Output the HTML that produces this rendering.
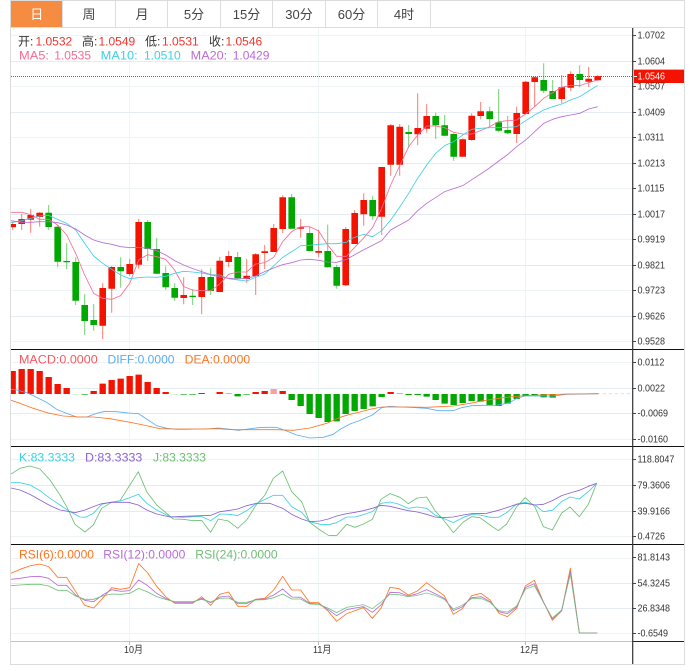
<!DOCTYPE html>
<html><head><meta charset="utf-8"><title>K线图</title>
<style>
html,body{margin:0;padding:0;background:#fff;width:693px;height:671px;overflow:hidden}
svg{display:block}
text{font-family:"Liberation Sans","Noto Sans CJK SC",sans-serif}
.ax{font-size:10px;fill:#333}
.tab{font-size:13px;fill:#444;text-anchor:middle}
.l{font-size:12px}
polyline{fill:none;stroke-width:2.5;stroke-linejoin:round}
</style></head><body>
<svg width="693" height="671" viewBox="0 0 693 671" xmlns="http://www.w3.org/2000/svg">
<defs><clipPath id="c"><rect x="11" y="28" width="621.5" height="613"/></clipPath></defs>
<rect width="693" height="671" fill="#fff"/>

<!-- grid -->
<g stroke="#eef3f6" stroke-width="1" fill="none">
<path d="M11 35.5H632M11 86.5H632M11 137.5H632M11 188.5H632M11 239.5H632M11 290.5H632M11 341.5H632"/>
<path d="M11 362.5H632M11 439.5H632M11 459.5H632M11 536.5H632M11 558.5H632M11 633.5H632"/>
<path d="M129.5 28V645M318.5 28V645M525.5 28V645"/>
</g>
<g stroke="#e3ecf3" stroke-width="1" fill="none">
<path d="M11 61.5H632M11 112.5H632M11 163.5H632M11 214.5H632M11 265.5H632M11 316.5H632"/>
<path d="M11 388.5H632M11 413.5H632M11 485.5H632M11 511.5H632M11 583.5H632M11 608.5H632"/>
</g>

<g clip-path="url(#c)">
<!-- wicks -->
<path stroke="#f41300" stroke-opacity=".55" stroke-width="1" fill="none" d="M12.7 221.7V230M21.7 214V230M30.7 209V232.7M39.7 211.7V226.7M102.7 283.3V339M111.7 266V312.7M129.7 259V276M138.7 218.7V268.7M183.7 277.3V304.3M201.7 269.3V314.3M219.7 257V292M228.7 251V267.3M246.7 258.7V282.7M255.7 253V295M264.7 245V269M273.7 224V252M282.7 195.3V233M300.7 219V237.7M318.7 229.7V257M345.7 227V286M354.7 210V244M363.7 193.3V225.7M381.7 167V235M390.7 124V175.7M399.7 124V175.7M417.7 93.3V145.3M426.7 104V132.7M462.7 138.3V156.7M471.7 113.3V140.7M480.7 102V119.3M516.7 106.7V143M525.7 81V114M534.7 76.7V106.7M561.7 75V103.3M570.7 71.3V91.3M588.7 67V87M597.7 75V80.7"/>
<path stroke="#00a800" stroke-opacity=".55" stroke-width="1" fill="none" d="M48.7 205V230M57.7 225V267M66.7 243.3V269M75.7 257.3V305M84.7 294V335M93.7 304V330.7M120.7 257.3V287.7M147.7 220V261M156.7 238V274M165.7 266.3V290M174.7 283.3V300.7M192.7 289.3V305M210.7 268.3V295M237.7 252V279M291.7 194V229M309.7 226.7V251.3M327.7 224.7V267.7M336.7 264.7V288.7M372.7 195.7V219.7M408.7 125V147.7M435.7 112.7V139M444.7 115V136.3M453.7 133.3V160.7M489.7 106.7V126M498.7 89V132.3M507.7 116V134.3M543.7 63.3V93.3M552.7 80V99M579.7 65.3V87.3"/>
<!-- bodies -->
<path stroke="#f41300" stroke-width="6.6" fill="none" d="M12.7 224V227.3M21.7 219V224M30.7 215V219.7M39.7 212.7V217M102.7 288V325.7M111.7 267V288.7M129.7 264V274M138.7 222V264.7M183.7 295V298M201.7 277V297M219.7 260.7V292M228.7 256V262M246.7 275.7V279M255.7 254.3V276M264.7 251.3V253M273.7 228V252M282.7 197.3V229M300.7 227.3V228.7M318.7 251V252.7M345.7 229V285.3M354.7 213V244M363.7 200V214.3M381.7 167V216.7M390.7 125.3V164.7M399.7 126.7V164.7M417.7 128V134.3M426.7 116V128.7M462.7 139.3V156.7M471.7 115.7V140M480.7 111.3V116M516.7 113V134M525.7 81.7V114M534.7 77.3V82M561.7 87.3V99M570.7 74V87.7M588.7 78.7V81.7M597.7 76V80.3"/>
<path stroke="#00a800" stroke-width="6.6" fill="none" d="M48.7 212.7V227M57.7 226.7V261.7M66.7 261V262.3M75.7 262V300.7M84.7 305V321M93.7 320V325M120.7 267V271.3M147.7 222V249M156.7 249V273.7M165.7 273V287.3M174.7 288V297.7M192.7 295.7V297M210.7 277V291M237.7 257V278.3M291.7 197.3V228.7M309.7 233V251M327.7 251V267.3M336.7 267V285.7M372.7 200V216.3M408.7 132V134M435.7 116V125.3M444.7 125.3V135.7M453.7 134V156.7M489.7 111.3V119M498.7 122.3V130.7M507.7 130V133.3M543.7 80V90.7M552.7 91V99M579.7 74V80"/>

<!-- MA left -->
<g transform="scale(.33333) translate(0,540)">
<polyline stroke="#fb6a94" points="33,97 65,97 92,104 119,118 146,118 173,135 200,165 227,220 254,285 281,340 308,355 335,358 362,347 389,310 416,240 443,224 470,230 497,238 524,270 551,320 578,330 605,332 632,332 659,312 686,283 713,276 740,276 767,252 794,248 821,232 848,185 875,155 902,140 929,140 956,153 983,195 1010,229 1040,229"/>
<polyline stroke="#3ccfe6" points="33,128 65,122 92,115 119,108 146,106 173,118 200,130 227,150 254,190 281,228 308,250 335,268 362,285 389,296 416,293 443,291 470,292 497,289 524,280 551,274 578,276 605,279 632,284 659,285 686,296 713,300 740,303 767,292 794,282 821,258 848,232 875,215 902,197 929,196 956,193 983,191 1010,191 1040,187"/>
<polyline stroke="#b96bd6" points="33,122 65,127 92,127 119,125 146,125 173,128 200,135 227,147 254,165 281,180 308,188 335,193 362,200 389,203 416,202 443,205 470,212 497,225 524,242 551,255 578,266 605,275 632,284 659,291 686,295 713,297 740,295 767,288 794,275 821,264 848,254 875,248 902,240 929,238 956,241 983,246 1010,247 1040,238"/>
</g>
<!-- MA right -->
<g transform="scale(.33333) translate(1050,0)">
<polyline stroke="#fb6a94" points="-10,769 0,757 40,715 68,682 95,625 122,555 150,495 176,440 203,405 230,378 257,378 284,383 311,397 338,402 365,402 392,392 419,380 446,365 473,362 500,360 527,342 554,320 581,295 608,278 635,262 662,256 689,257 716,248 743,240"/>
<polyline stroke="#3ccfe6" points="-10,727 0,717 40,703 68,710 95,692 122,660 150,620 176,580 203,535 230,495 257,460 284,437 311,425 338,405 365,388 392,385 419,383 446,383 473,382 500,380 527,362 554,345 581,330 608,320 635,312 662,300 689,290 716,273 743,256"/>
<polyline stroke="#b96bd6" points="-10,778 0,772 40,750 95,722 122,690 176,660 203,632 230,610 284,575 338,557 367,538 410,510 475,462 500,440 527,420 554,395 581,370 608,358 635,350 662,345 689,340 716,327 743,320"/>
</g>

<!-- MACD bars -->
<g transform="scale(.33333) translate(0,1035)" fill="none" stroke-width="19">
<path stroke="#f41300" d="M38 78V147M65 72V147M92 72V147M119 78V147M146 96V147M173 117V147M200 129V147M281 138V147M308 116V147M335 105V147M362 101V147M389 93V147M416 89V147M443 111V147M470 129V147M497 141V147M605 144V147M659 141V147M767 141V147M794 138V147M848 138V147M1172 141V147"/>
<path stroke="#f9a0a0" d="M686 144V147M821 132V147M1199 144V147"/>
<path stroke="#00a800" d="M254 147V149M551 147V149M578 147V149M713 147V154M740 147V149M875 147V165M902 147V183M929 147V207M956 147V219M983 147V231M1010 147V229M1037 147V207M1064 147V198M1091 147V192M1118 147V184M1145 147V156M1226 147V150M1253 147V150M1280 147V155M1307 147V165M1334 147V176M1361 147V180M1388 147V174M1415 147V168M1442 147V170M1469 147V180M1496 147V183M1523 147V176M1550 147V162M1577 147V152M1604 147V152M1631 147V157M1658 147V158"/>
<path stroke="#bfe3c0" d="M227 147V149M524 147V149M1685 147V150"/>
<path stroke="#cfe6f5" stroke-width="3" stroke-dasharray="10 8" d="M1790 146H1890"/>
<polyline stroke="#58adf2" points="33,133 50,135 80,143 110,157 140,172 170,193 200,205 230,216 260,216 290,205 315,199 350,200 385,204 415,206 440,222 470,242 500,250 530,253 560,253 590,252 620,252 655,249 685,252 715,256 745,252 775,248 800,247 830,247 860,258 890,270 930,279 970,277 1000,268 1020,253 1050,237 1080,226 1117,210 1145,188 1170,184 1200,186 1230,187 1280,190 1315,197 1360,197 1385,188 1415,182 1450,181 1490,181 1530,173 1550,160 1575,153 1620,153 1660,153 1700,148 1795,146"/>
<polyline stroke="#ff7420" points="33,166 60,175 100,190 140,203 190,213 240,216 280,216 330,221 380,230 430,240 480,251 520,252 600,252 650,251 700,254 760,254 830,254 880,256 930,249 980,235 1020,217 1050,208 1080,201 1110,193 1145,186 1170,186 1220,186 1280,187 1320,185 1360,183 1410,175 1450,167 1510,158 1560,153 1620,150 1700,147 1795,146"/>
</g>

<!-- KDJ -->
<g transform="scale(.33333) translate(0,1335)">
<polyline stroke="#6cbf74" points="33,87 60,70 90,63 120,72 150,105 180,150 200,185 225,238 255,261 280,240 305,190 335,172 360,167 415,80 440,140 470,180 520,222 550,223 580,227 605,226 632,262 655,222 685,228 713,250 740,225 770,178 795,150 820,100 848,78 875,140 905,170 929,232 960,255 985,271 1010,272 1040,238"/>
<polyline stroke="#3ccfe6" points="33,113 60,113 90,120 120,137 150,160 180,180 210,200 240,216 255,217 280,205 305,178 335,171 365,167 415,148 440,175 470,195 510,215 550,217 580,215 605,215 632,227 660,207 690,208 713,212 740,197 770,175 820,151 848,151 875,185 905,202 929,230 960,238 985,239 1010,233 1040,216"/>
<polyline stroke="#8b62cf" points="33,129 60,135 90,148 120,165 150,182 180,195 210,200 225,203 255,195 280,185 305,176 335,172 385,172 415,180 440,195 470,207 510,216 550,214 605,212 632,211 660,200 690,196 713,192 740,182 770,175 810,175 848,190 875,208 905,222 929,230 960,228 985,222 1010,213 1040,206"/>
</g>
<g transform="scale(.33333) translate(1020,1335)">
<polyline stroke="#6cbf74" points="20,238 45,247 70,237 97,223 123,163 150,146 180,157 205,176 232,159 260,156 285,197 305,218 340,263 370,231 395,215 420,218 450,240 475,257 500,237 530,185 556,158 585,186 610,245 637,255 665,204 690,186 718,215 745,178 770,115"/>
<polyline stroke="#3ccfe6" points="20,216 45,216 70,209 97,200 123,175 150,171 175,177 205,190 232,186 260,190 285,210 305,218 340,233 370,217 395,209 420,210 450,217 475,217 500,203 530,177 556,172 585,180 610,200 637,196 665,170 690,156 718,162 745,140 770,115"/>
<polyline stroke="#8b62cf" points="20,206 45,202 70,197 97,190 123,181 150,184 175,190 205,197 232,201 260,208 285,216 305,218 340,216 370,210 395,206 440,205 475,196 500,188 530,178 556,175 585,180 610,178 637,167 665,152 690,144 718,136 745,124 770,115"/>
</g>

<!-- RSI -->
<g transform="scale(.33333) translate(0,1635)">
<polyline stroke="#ff7420" points="33,85 60,73 92,62 119,57 146,65 173,97 200,97 227,140 254,181 281,189 308,160 335,128 362,133 389,128 416,56 443,84 470,124 497,155 524,175 551,175 578,175 605,155 632,181 659,148 686,141 713,184 740,184 767,163 794,160 821,135 848,94 875,135 902,135 929,173 956,173 983,197 1010,229 1040,206"/>
<polyline stroke="#b96bd6" points="33,103 60,100 92,95 119,94 146,100 173,121 200,121 227,150 254,166 281,170 308,150 335,134 362,139 389,137 416,105 443,122 470,145 497,160 524,172 551,172 578,172 605,160 632,173 659,156 686,153 713,176 740,176 767,163 794,162 821,150 848,132 875,156 902,157 929,175 956,177 983,193 1010,212 1040,194"/>
<polyline stroke="#6cbf74" points="33,122 60,120 92,118 119,118 146,123 173,136 200,136 227,153 254,163 281,163 308,153 335,147 362,148 389,145 416,130 443,141 470,155 497,163 524,170 551,170 578,170 605,163 632,171 659,160 686,159 713,172 740,172 767,165 794,164 821,158 848,147 875,162 902,162 929,177 956,178 983,189 1010,203 1040,187"/>
</g>
<g transform="scale(.33333) translate(1020,1635)">
<polyline stroke="#ff7420" points="20,206 45,197 70,188 97,220 123,190 150,127 177,131 205,150 232,138 260,113 285,132 313,152 340,208 366,192 395,152 423,145 450,165 477,205 502,215 530,190 556,123 583,106 610,170 637,226 665,197 691,70 718,264 772,264"/>
<polyline stroke="#b96bd6" points="20,194 45,189 70,185 97,202 123,180 150,142 177,143 205,153 232,146 260,134 285,146 313,160 340,197 366,186 395,158 423,155 450,170 477,200 502,206 530,186 556,128 583,116 610,170 637,222 665,198 691,80 718,264 772,264"/>
<polyline stroke="#6cbf74" points="20,187 45,183 70,179 97,191 123,171 150,148 177,149 205,155 232,151 260,144 285,151 313,163 340,192 366,181 395,161 423,160 450,172 477,197 502,201 530,183 556,133 583,122 610,172 637,219 665,195 691,88 718,264 772,264" opacity=".85"/>
</g>
</g>

<!-- last price dotted line -->
<path d="M11 76.5H632" stroke="#ff2a2a" stroke-width="1" stroke-dasharray="1 1" fill="none"/>

<!-- separators -->
<path d="M11 349.5H684M11 446.5H684M11 544.5H684" stroke="#111" stroke-width="1" fill="none"/>
<path d="M11 641.5H632" stroke="#c4c4c4" stroke-width="1" fill="none"/>
<path d="M632.5 641.5H684" stroke="#222" stroke-width="1" fill="none"/>
<path d="M129.5 641V645M318.5 641V645M525.5 641V645" stroke="#bbb" stroke-width="1" fill="none"/>
<!-- axis -->
<path d="M632.7 28V664" stroke="#333" stroke-width="1.2" fill="none"/>
<path stroke="#444" stroke-width="1" fill="none" d="M633 35.5H636M633 61.5H636M633 86.5H636M633 112.5H636M633 137.5H636M633 163.5H636M633 188.5H636M633 214.5H636M633 239.5H636M633 265.5H636M633 290.5H636M633 316.5H636M633 341.5H636M633 362.5H636M633 388.5H636M633 413.5H636M633 439.5H636M633 459.5H636M633 485.5H636M633 511.5H636M633 536.5H636M633 557.5H636M633 583.5H636M633 608.5H636M633 633.5H636"/>

<!-- tag -->
<rect x="634" y="69" width="50" height="1.2" fill="#f9a59c"/>
<rect x="634" y="70" width="50" height="13" fill="#f41300"/>
<path d="M634 76.5H637" stroke="#fff" stroke-width="1"/>

<!-- axis labels -->
<g transform="translate(637.5,0) scale(.9,1)">
<text class="ax" x="0" y="38.5">1.0702</text>
<text class="ax" x="0" y="64.5">1.0604</text>
<text class="ax" x="0" y="89.5">1.0507</text>
<text class="ax" x="0" y="115.5">1.0409</text>
<text class="ax" x="0" y="140.5">1.0311</text>
<text class="ax" x="0" y="166.5">1.0213</text>
<text class="ax" x="0" y="191.5">1.0115</text>
<text class="ax" x="0" y="217.5">1.0017</text>
<text class="ax" x="0" y="242.5">0.9919</text>
<text class="ax" x="0" y="268.5">0.9821</text>
<text class="ax" x="0" y="293.5">0.9723</text>
<text class="ax" x="0" y="319.5">0.9626</text>
<text class="ax" x="0" y="344.5">0.9528</text>
<text class="ax" x="0" y="365.5">0.0112</text>
<text class="ax" x="0" y="391.5">0.0022</text>
<text class="ax" x="0" y="416.5">-0.0069</text>
<text class="ax" x="0" y="442.5">-0.0160</text>
<text class="ax" x="0" y="462.5">118.8047</text>
<text class="ax" x="0" y="488.5">79.3606</text>
<text class="ax" x="0" y="514.5">39.9166</text>
<text class="ax" x="0" y="539.5">0.4726</text>
<text class="ax" x="0" y="560.5">81.8143</text>
<text class="ax" x="0" y="586.5">54.3245</text>
<text class="ax" x="0" y="611.5">26.8348</text>
<text class="ax" x="0" y="636.5">-0.6549</text>
<text x="0" y="79.5" font-size="10" fill="#fff">1.0546</text>
</g>
<g transform="scale(.9,1)">
<text class="ax" x="137.8" y="653">10月</text>
<text class="ax" x="347.8" y="653">11月</text>
<text class="ax" x="577.8" y="653">12月</text>
</g>

<!-- legends -->
<g class="l">
<text class="l" x="18" y="45.5" fill="#333">开:</text><text class="l" x="35.5" y="45.5" fill="#f5332c">1.0532</text>
<text class="l" x="82" y="45.5" fill="#333">高:</text><text class="l" x="98.5" y="45.5" fill="#f5332c">1.0549</text>
<text class="l" x="145" y="45.5" fill="#333">低:</text><text class="l" x="162" y="45.5" fill="#f5332c">1.0531</text>
<text class="l" x="209" y="45.5" fill="#333">收:</text><text class="l" x="225.5" y="45.5" fill="#f5332c">1.0546</text>
<text class="l" x="19" y="59.5" fill="#fb6a94" textLength="30" lengthAdjust="spacingAndGlyphs">MA5:</text><text class="l" x="54.3" y="59.5" fill="#fb6a94">1.0535</text>
<text class="l" x="100.7" y="59.5" fill="#3ccfe6" textLength="37" lengthAdjust="spacingAndGlyphs">MA10:</text><text class="l" x="144" y="59.5" fill="#3ccfe6">1.0510</text>
<text class="l" x="190.7" y="59.5" fill="#b96bd6" textLength="36.5" lengthAdjust="spacingAndGlyphs">MA20:</text><text class="l" x="232.7" y="59.5" fill="#b96bd6">1.0429</text>

<text class="l" x="19" y="363.5" fill="#f9575f" textLength="78.7" lengthAdjust="spacingAndGlyphs">MACD:0.0000</text>
<text class="l" x="107.5" y="363.5" fill="#58adf2" textLength="67" lengthAdjust="spacingAndGlyphs">DIFF:0.0000</text>
<text class="l" x="184.7" y="363.5" fill="#ff7420" textLength="65.5" lengthAdjust="spacingAndGlyphs">DEA:0.0000</text>

<text class="l" x="19" y="461.5" fill="#3ccfe6" textLength="56" lengthAdjust="spacingAndGlyphs">K:83.3333</text>
<text class="l" x="85" y="461.5" fill="#8b62cf" textLength="57.3" lengthAdjust="spacingAndGlyphs">D:83.3333</text>
<text class="l" x="153" y="461.5" fill="#6cbf74" textLength="53" lengthAdjust="spacingAndGlyphs">J:83.3333</text>

<text class="l" x="19" y="558.5" fill="#ff7420" textLength="75" lengthAdjust="spacingAndGlyphs">RSI(6):0.0000</text>
<text class="l" x="103.3" y="558.5" fill="#b96bd6" textLength="82" lengthAdjust="spacingAndGlyphs">RSI(12):0.0000</text>
<text class="l" x="195.3" y="558.5" fill="#6cbf74" textLength="82.4" lengthAdjust="spacingAndGlyphs">RSI(24):0.0000</text>
</g>

<!-- tabs -->
<rect x="11" y="1" width="674" height="26.5" fill="#fff"/>
<rect x="11" y="1" width="51" height="26" fill="#f68c41"/>
<path d="M62.5 1V27M115.5 1V27M167.5 1V27M220.5 1V27M272.5 1V27M325.5 1V27M377.5 1V27M430.5 1V27" stroke="#ddd" stroke-width="1" fill="none"/>
<text class="tab" x="36.7" y="19" style="fill:#fff">日</text>
<text class="tab" x="89" y="19">周</text>
<text class="tab" x="142" y="19">月</text>
<text class="tab" x="194" y="19">5分</text>
<text class="tab" x="246.5" y="19">15分</text>
<text class="tab" x="299" y="19">30分</text>
<text class="tab" x="351.5" y="19">60分</text>
<text class="tab" x="404" y="19">4时</text>

<!-- outer frame -->
<path d="M10.5 0V665M684.5 0V665M10 .5H685M10 27.5H685M10 664.5H685" stroke="#dcdcdc" stroke-width="1" fill="none"/>
</svg>
</body></html>
